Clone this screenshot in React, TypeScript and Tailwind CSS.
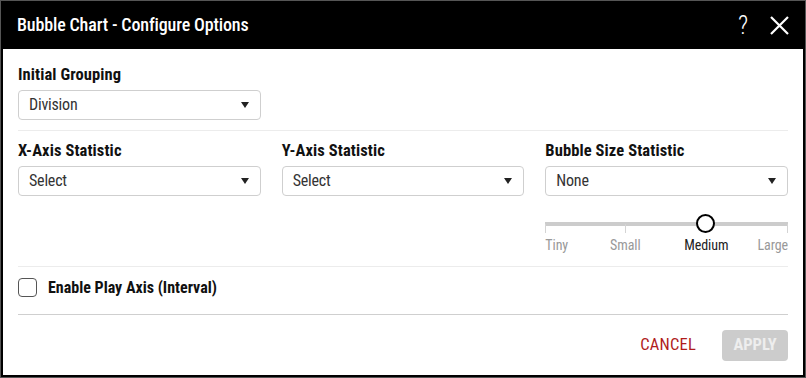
const font = { fontFamily: "'Roboto Condensed', Roboto, 'Liberation Sans', sans-serif" };

function Select({ value }: { value: string }) {
  return (
    <div className="flex h-[30px] items-center justify-between rounded-[4px] border border-[#cfcfcf] bg-white pl-[10px] pr-[11px] text-[16px] text-[#333]">
      <span className="tracking-[-0.2px]">{value}</span>
      <svg width="8" height="6" viewBox="0 0 8 6">
        <path d="M0 0 H8 L4 6 Z" fill="#222" />
      </svg>
    </div>
  );
}

function Field({ label, value }: { label: string; value: string }) {
  return (
    <div className="flex flex-col gap-[6px]">
      <label className="text-[16.5px] font-bold leading-[18px] tracking-[0.1px] text-[#111]">{label}</label>
      <Select value={value} />
    </div>
  );
}

// bubble size slider: ticks at 0 / 80 / 161 / end, thumb on "Medium"
function SizeSlider() {
  return (
    <div className="mt-[18px] flex flex-col">
      <div className="relative h-[18px]">
        <div className="absolute left-0 right-0 top-[8px] h-[4px] bg-[#cccccc]" />
        <div className="absolute left-0 top-[10px] h-[9px] w-px bg-[#d4d4d4]" />
        <div className="absolute left-[80px] top-[10px] h-[9px] w-px bg-[#d4d4d4]" />
        <div className="absolute left-[161px] top-[10px] h-[9px] w-px bg-[#d4d4d4]" />
        <div className="absolute right-0 top-[10px] h-[9px] w-px bg-[#d4d4d4]" />
        <div className="absolute left-[151px] top-0 h-[19px] w-[19px] rounded-full border-2 border-black bg-white" />
      </div>
      <div className="relative mt-[5px] h-[16px] text-[14px] leading-[16px] tracking-[-0.1px] text-[#999]">
        <span className="absolute left-0">Tiny</span>
        <span className="absolute left-[80px] -translate-x-1/2">Small</span>
        <span className="absolute left-[161px] -translate-x-1/2 text-[#222]">Medium</span>
        <span className="absolute right-0">Large</span>
      </div>
    </div>
  );
}

export default function App() {
  return (
    <div style={font} className="h-[378px] w-[806px] border border-[#555] bg-black">
      <div className="flex h-full w-full flex-col border-2 border-black bg-white">
        <div className="flex h-[46px] shrink-0 items-center justify-between bg-black pb-[4px] pl-[14px] pr-[14px]">
          <h1 className="text-[18px] font-medium tracking-[-0.15px] text-white">Bubble Chart - Configure Options</h1>
          <div className="flex items-center gap-[22px] pt-[2px] text-white">
            <span className="text-[25px] font-light leading-none">?</span>
            <svg width="19" height="19" viewBox="0 0 19 19">
              <path d="M1 1 L18 18 M18 1 L1 18" stroke="white" strokeWidth="2.2" />
            </svg>
          </div>
        </div>
        <div className="flex flex-1 flex-col px-[15px]">
          <div className="w-[243px] pt-[17px] pb-[10px]">
            <Field label="Initial Grouping" value="Division" />
          </div>
          <div className="h-px bg-[#ececec]" />
          <div className="grid grid-cols-3 gap-x-[21px] pt-[11px] pb-[13px]">
            <Field label="X-Axis Statistic" value="Select" />
            <Field label="Y-Axis Statistic" value="Select" />
            <div className="flex flex-col">
              <Field label="Bubble Size Statistic" value="None" />
              <SizeSlider />
            </div>
          </div>
          <div className="h-px bg-[#ececec]" />
          <label className="flex h-[47px] items-start gap-[11px] pt-[11px]">
            <span className="h-[19px] w-[19px] shrink-0 rounded-[4px] border border-[#555] bg-white" />
            <span className="text-[16px] font-bold leading-[19px] text-[#111]">Enable Play Axis (Interval)</span>
          </label>
          <div className="h-px bg-[#cfcfcf]" />
          <div className="flex flex-1 items-start justify-end gap-[26px] pt-[15px]">
            <button className="mt-[5px] text-[16.5px] leading-[20px] tracking-[0.2px] text-[#b01c1c]">CANCEL</button>
            <button className="h-[31px] w-[66px] rounded-[4px] bg-[#cccccc] text-[16.5px] font-bold tracking-[0px] text-[#eeeeee]">APPLY</button>
          </div>
        </div>
      </div>
    </div>
  );
}
